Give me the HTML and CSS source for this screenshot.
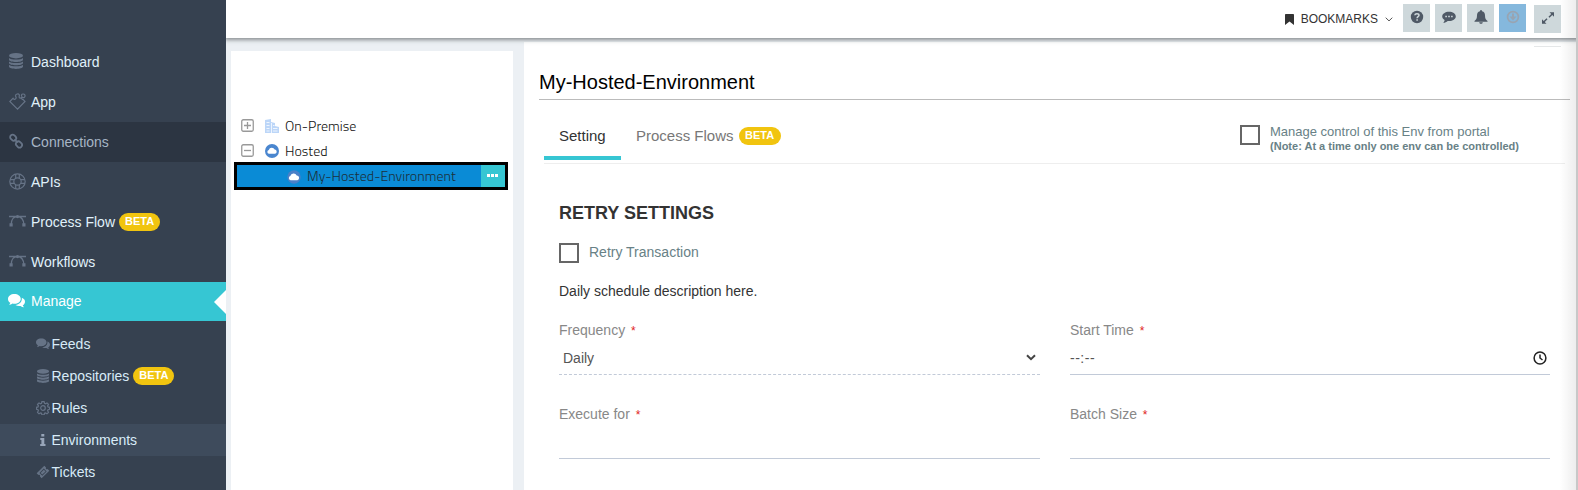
FILE: index.html
```
<!DOCTYPE html>
<html lang="en">
<head>
<meta charset="utf-8">
<title>Environments</title>
<link rel="stylesheet" href="styles.css">
</head>
<body>
<svg class="defs" width="0" height="0">
  <symbol id="db" viewBox="0 0 14 16"><ellipse cx="7" cy="2.700" rx="7" ry="2.700"/><path d="M0 5c2 2 12 2 14 0v1.700c0 3-14 3-14 0zM0 8.400c2 2 12 2 14 0v1.700c0 3-14 3-14 0zM0 11.800c2 2 12 2 14 0v1.700c0 3.200-14 3.200-14 0z"/></symbol>
  <symbol id="chat" viewBox="0 0 16 13"><path d="M6 0c3.300 0 6 2 6 4.500S9.300 9 6 9c-.6 0-1.200 0-1.700-.2C3.300 9.600 2.200 10 1 10.100c.6-.6 1-1.200 1.200-1.900C.8 7.400 0 6 0 4.500 0 2 2.700 0 6 0z"/><path d="M13 3.500c1.800.7 3 2 3 3.600 0 1.400-.8 2.600-2.100 3.400.2.700.6 1.200 1.200 1.800-1.300 0-2.400-.4-3.300-1.200-1.800.3-3.500 0-4.800-.9 3.700-.3 6.500-2.800 6-6.700z"/></symbol>
  <symbol id="flow" viewBox="0 0 17 12"><path d="M0 1.500h17M2.200 9.500C2.200 4.800 4.700 1.500 8.500 1.500s6.300 3.300 6.300 8" fill="none" stroke="currentColor" stroke-width="1.300"/><circle cx="8.500" cy="1.600" r="1.600"/><path d="M.5 8.300h3.200v3.200H.5zM13.300 8.300h3.200v3.200h-3.200z"/></symbol>
</svg>
<div class="app">
  <nav class="sidebar">
    <a class="item"><svg class="ico" viewBox="0 0 14 16"><use href="#db"/></svg>Dashboard</a>
    <a class="item"><svg class="ico wide" viewBox="0 0 17 17"><path d="M8.500 16.200.8 8.500 4 5.300c.6 1.500 2.900 1.300 3.100-.3.200-1.300-1-1.700-.5-2.700.5-1.200 2.700-1.900 3.500-.8.700 1-.2 1.700.1 2.700.4 1.200 2.200 1.200 2.600 0 .4-1.100-.7-1.600-.3-2.400.4-.9 2.600-1.100 3.200-.2.600.8.400 2.500-.5 2.900-.8.400-1.500-.4-2.200.2-.8.800.1 2 1.200 2l1.800 1.800z" class="line"/></svg>App</a>
    <a class="item dim"><svg class="ico" viewBox="0 0 14 15"><g class="line thick"><rect x="1" y="1.500" width="6.500" height="5" rx="2.500" transform="rotate(45 4 4)"/><rect x="6.700" y="8.500" width="6.500" height="5" rx="2.500" transform="rotate(45 10 11)"/><path d="m5.600 5.800 3 3.300"/></g></svg>Connections</a>
    <a class="item"><svg class="ico wide" viewBox="0 0 17 17"><g class="line"><circle cx="8.500" cy="8.500" r="7.700"/><circle cx="8.500" cy="8.500" r="3.700"/><path d="M6.700 1v4.200M10.300 1v4.200M6.700 11.800V16M10.300 11.800V16M1 6.700h4.200M1 10.300h4.200M11.800 6.700H16M11.800 10.300H16"/></g></svg>APIs</a>
    <a class="item"><svg class="ico flow" viewBox="0 0 17 12"><use href="#flow"/></svg>Process Flow<span class="beta">BETA</span></a>
    <a class="item"><svg class="ico flow" viewBox="0 0 17 12"><use href="#flow"/></svg>Workflows</a>
    <a class="item active"><svg class="ico chat" viewBox="0 0 16 13"><use href="#chat"/></svg>Manage</a>
    <div class="submenu">
      <a class="sub"><svg class="sico" viewBox="0 0 16 13"><use href="#chat"/></svg>Feeds</a>
      <a class="sub"><svg class="sico" viewBox="0 0 14 16"><use href="#db"/></svg>Repositories<span class="beta">BETA</span></a>
      <a class="sub"><svg class="sico" viewBox="0 0 14 14"><g class="line"><circle cx="7" cy="7" r="2.300"/><path d="m5.900.7h2.200l.4 1.700 1 .4 1.500-.9 1.500 1.500-.9 1.500.4 1 1.600.4v2l-1.600.5-.4 1 .9 1.500-1.500 1.500-1.500-.9-1 .4-.4 1.600H5.900l-.4-1.600-1-.4-1.500.9-1.500-1.500.9-1.500-.4-1L.5 8.300v-2L2 5.900l.4-1-.9-1.500L3 1.900l1.500.9 1-.4z"/></g></svg>Rules</a>
      <a class="sub current"><svg class="sico info" viewBox="0 0 14 14"><path d="M5.300 1h3v2.500h-3zM4.300 5h4v6h1.200v2H4.200v-2h1.200V7H4.300z"/></svg>Environments</a>
      <a class="sub"><svg class="sico" viewBox="0 0 14 14"><path fill-rule="evenodd" d="M8.300.8 10 2.500c-.6 1.200.4 2.200 1.600 1.600l1.700 1.700-7.700 7.500L4 11.600c.5-1.200-.5-2.200-1.600-1.600L.7 8.300zM7.800 3.600 3.500 7.900l2.800 2.800 4.300-4.300zM7.800 4.700l1.800 1.700-3.300 3.200-1.700-1.700z"/></svg>Tickets</a>
    </div>
  </nav>
  <div class="page">
    <header class="topbar">
      <svg class="bookmark" viewBox="0 0 9 11"><path d="M.8 0h7.400q.8 0 .8.800V11L4.500 7.400 0 11V.8Q0 0 .8 0z"/></svg>
      <span class="bm">BOOKMARKS</span>
      <svg class="caret" viewBox="0 0 8 5"><path d="m.7.700 3.300 3.200L7.300.7"/></svg>
      <div class="btns">
        <span class="btn"><svg viewBox="0 0 14 14"><circle cx="7" cy="7" r="6.200"/><path class="cut" d="M4.800 5.300C5 3.200 9 3.200 9 5.300c0 1.400-1.900 1.400-1.900 2.900M7.100 9.200v1.600"/></svg></span>
        <span class="btn"><svg viewBox="0 0 14 14"><path d="M7 1.800c3.700 0 6.800 2 6.800 4.700S10.700 11 7 11l-1.300-.1C4.500 12 3 12.700 1.300 12.900c.7-.8 1.200-1.600 1.300-2.800C1.200 9.200.2 8 .2 6.500.2 3.900 3.300 1.800 7 1.800z"/><path class="cut dots" d="M3.300 6.500h1.600M6.200 6.500h1.600M9.100 6.500h1.600"/></svg></span>
        <span class="btn"><svg viewBox="0 0 14 14"><path d="M7 0q1 0 1 1.200c2.200.5 3 2.200 3 4.300 0 2.900.9 4.400 2.500 5.500v.8H.5V11C2.100 9.900 3 8.400 3 5.500c0-2.100.8-3.800 3-4.300Q6 0 7 0zM5.200 12.200h3.600c-.2 2-3.400 2-3.600 0z"/></svg></span>
        <span class="btn blue"><svg viewBox="0 0 14 14"><circle cx="7" cy="7" r="5.400" fill="none" stroke="currentColor" stroke-width="1.700"/><path d="M6 3.400h2v3.200h2.500L7 10.400 3.500 6.600H6z"/></svg></span>
        <span class="btn last"><svg viewBox="0 0 14 14"><path d="M8.500 1.200h4.500v4.500zM1 8.300v4.500h4.500z"/><path d="M11.500 2.700 8 6.200M2.500 11.300 6 7.800" stroke="currentColor" stroke-width="1.500"/></svg></span>
      </div>
    </header>
    <div class="body">
      <section class="tree">
        <div class="node"><svg class="tog" viewBox="0 0 13 13"><rect x=".75" y=".75" width="11.500" height="11.500" rx="1.500"/><path d="M3 6.500h7M6.500 3v7"/></svg><svg class="nico" viewBox="0 0 14 14"><path fill="#bcd6f8" d="M0 1l6-1v3l4 1v3l4 1v6H0z"/><path stroke="#eef5fe" d="M1.500 3.500h3M1.500 6.500h3M1.500 9.500h3M1.500 12h3M6.500 4v10M8 6.500h1.500M8 9.500h4.500M8 12h4.500"/></svg>On-Premise</div>
        <div class="node"><svg class="tog" viewBox="0 0 13 13"><rect x=".75" y=".75" width="11.500" height="11.500" rx="1.500"/><path d="M3 6.500h7"/></svg><svg class="nico low" viewBox="0 0 14 14"><circle cx="7" cy="7" r="7" fill="#4a86cf"/><path fill="#fff" d="M4 9.800a2 2 0 0 1-.2-3.900 3.200 3.200 0 0 1 5.900-.4 2.200 2.200 0 0 1 .4 4.300z"/></svg>Hosted</div>
        <div class="node selected"><svg class="nico low" viewBox="0 0 14 14"><circle cx="7" cy="7" r="6.700" fill="#4a80c8"/><path fill="#fff" d="M3.500 10.200a2.200 2.200 0 0 1-.2-4.200 3.400 3.400 0 0 1 6.400-.5 2.400 2.400 0 0 1 .7 4.700z"/></svg><span class="name">My-Hosted-Environment</span><span class="more"><i></i><i></i><i></i></span></div>
      </section>
      <main class="main">
        <div class="stub"></div>
        <h1>My-Hosted-Environment</h1>
        <div class="tabs">
          <span class="tab on">Setting</span>
          <span class="tab">Process Flows<span class="beta">BETA</span></span>
          <label class="manage"><span class="box"></span><span class="mtext">Manage control of this Env from portal<b>(Note: At a time only one env can be controlled)</b></span></label>
        </div>
        <div class="form">
          <h2>RETRY SETTINGS</h2>
          <label class="retry"><span class="box"></span><span class="rtext">Retry Transaction</span></label>
          <p class="desc">Daily schedule description here.</p>
          <div class="grid">
            <div class="field"><label>Frequency <em>*</em></label><div class="ctl dashed"><span class="val">Daily</span><svg class="sel" viewBox="0 0 10 7"><path d="m1 1.200 4 4 4-4"/></svg></div></div>
            <div class="field"><label>Start Time <em>*</em></label><div class="ctl"><span class="time">--:--</span><svg class="clock" viewBox="0 0 14 14"><circle cx="7" cy="7" r="5.900"/><path d="M7 3.500V7l2.500 2"/></svg></div></div>
            <div class="field"><label>Execute for <em>*</em></label><div class="ctl"></div></div>
            <div class="field"><label>Batch Size <em>*</em></label><div class="ctl"></div></div>
          </div>
        </div>
      </main>
    </div>
  </div>
  <div class="edge"></div>
</div>
</body>
</html>
```
FILE: styles.css
```
* { box-sizing: border-box; }
body { margin: 0; font: 14px/20px "Liberation Sans", Arial, sans-serif; color: #333; background: #fff; }
.defs { display: block; }
.app { display: flex; width: 1578px; height: 490px; overflow: hidden; position: relative; }
.line { fill: none; stroke: currentColor; stroke-width: 1.2; }
.thick { stroke-width: 1.8; }

/* navigation */
.sidebar { flex: none; width: 226px; padding-top: 42px; background: #364150; }
.item { display: flex; align-items: center; height: 40px; padding-left: 9px; color: #e0f1fb; }
.ico { width: 14px; height: 16px; margin-right: 8px; color: #667386; fill: currentColor; position: relative; top: -1px; }
.ico.wide, .ico.flow, .ico.chat { width: 17px; margin-right: 5px; }
.ico.wide { height: 17px; }
.ico.flow { height: 12px; }
.item.dim { background: #2c3542; color: #a7b5c6; }
.item.active { position: relative; height: 39px; background: #36c6d3; color: #fff; padding: 0 0 2px 8px; }
.item.active .ico { color: #fff; height: 14px; margin-right: 6px; top: 0; }
.item.active::after { content: ""; position: absolute; right: 0; top: 8px; border: 12px solid transparent; border-left: 0; border-right-color: #fff; }
.submenu { padding-top: 7px; }
.sub { display: flex; align-items: center; height: 32px; padding-left: 36px; color: #d8ebf8; }
.sub.current { background: #3e4b5c; }
.sico { width: 14px; height: 14px; margin-right: 1.500px; color: #667386; fill: currentColor; }
.sico.info { color: #97a5b8; }
.beta { display: inline-block; width: 41px; height: 18px; margin-left: 4px; border-radius: 9px; background: #f1c40f; color: #fff; font-weight: bold; font-size: 11px; line-height: 17px; text-align: center; }

/* header */
.page { flex: 1; display: flex; flex-direction: column; background: #ecf0f4; }
.topbar { position: relative; z-index: 1; flex: none; display: flex; align-items: center; height: 38px; padding-right: 17px; justify-content: flex-end; background: #fff; box-shadow: 0 1px 4px 1px rgba(70, 76, 80, .6); clip-path: inset(0 0 -10px 0); }
.bookmark { width: 9px; height: 11px; fill: #333; margin-right: 7px; }
.bm { font-size: 12px; }
.caret { width: 8px; height: 5px; margin: 0 10px 0 7px; fill: none; stroke: #555; }
.btns { display: flex; gap: 5px; margin-bottom: 2px; }
.btn { display: flex; align-items: center; justify-content: center; width: 27px; height: 28px; background: #ced8db; color: #4f5966; }
.btn svg { width: 14px; height: 14px; fill: currentColor; position: relative; top: -1px; }
.btn .cut { fill: none; stroke: #ced8db; stroke-width: 1.5; }
.btn.blue { background: #85b8dd; color: #98a4b2; }
.btn.last { margin-left: 3px; position: relative; top: 1px; }

/* environment tree */
.body { flex: 1; display: flex; }
.tree { width: 282px; margin: 13px 11px 0 5px; padding: 62px 5px 0 4px; background: #fff; font-family: "Titillium Web", "Open Sans", sans-serif; font-weight: 300; }
.node { display: flex; align-items: center; height: 25px; padding-left: 6px; color: #111; letter-spacing: .03px; }
.tog { width: 13px; height: 13px; margin-right: 11px; fill: none; stroke: #999; stroke-width: 1.3; }
.nico { width: 14px; height: 14px; margin-right: 6px; }
.nico.low { margin-top: 1px; }
.node.selected { height: 28px; margin: -1px 0 0 -1px; padding-left: 50px; border: 3px solid #000; background: #0a8bd6; color: #1c303b; }
.name { flex: 1; }
.more { display: flex; gap: 1px; padding: 0 1px 2px 0; align-items: center; justify-content: center; width: 24px; height: 22px; background: #36c6d3; }
.more i { width: 3px; height: 3px; background: #fff; }

/* detail panel */
.main { flex: 1; margin-top: 4px; padding-left: 15px; background: #fff; }
.stub { width: 27px; height: 1px; margin: 4px 0 0 995px; background: #e5e7e8; }
h1 { width: 1031px; height: 53px; margin: 0; padding-top: 22px; border-bottom: 1px solid #bbb; font-weight: normal; font-size: 20px; line-height: 26px; color: #000; }
.tabs { display: flex; width: 1021px; height: 64px; margin-left: 5px; padding-top: 20px; border-bottom: 1px solid #eee; }
.tab { height: 40px; padding: 6px 15px 0; font-size: 15px; color: #777; white-space: nowrap; }
.tab.on { width: 77px; border-bottom: 4px solid #36c6d3; color: #333; }
.tab .beta { margin-left: 5px; width: 42px; vertical-align: 2px; }
.box { flex: none; width: 20px; height: 20px; border: 2px solid #666; }
.manage { display: flex; gap: 10px; margin: 5px 46px 0 auto; color: #688186; }
.mtext { font-size: 13px; line-height: 14px; }
.mtext b { display: block; font-size: 11px; line-height: 15px; }
.form { padding: 38px 0 0 20px; }
h2 { margin: 0; font-size: 18px; line-height: 22px; }
.retry { display: flex; align-items: center; gap: 10px; height: 20px; margin-top: 19px; color: #688186; }
.rtext { padding-bottom: 2px; }
.desc { margin: 18px 0 19px; color: #333; }
.grid { display: grid; grid-template-columns: 481px 480px; column-gap: 30px; }
.field { height: 84px; color: #888; }
.field em { color: #e02222; font-style: normal; font-size: 12px; margin-left: 2px; }
.ctl { display: flex; align-items: center; justify-content: space-between; height: 34px; border-bottom: 1px solid #c2cad8; color: #555; }
.ctl.dashed { border-bottom-style: dashed; }
.val { padding-left: 4px; }
.time { letter-spacing: .5px; }
.sel { width: 10px; height: 7px; margin-right: 4px; fill: none; stroke: #444; stroke-width: 2; }
.clock { width: 14px; height: 14px; margin-right: 3px; fill: none; stroke: #222; stroke-width: 1.5; }

/* fade along the window border */
.edge { position: absolute; z-index: 2; top: 0; right: 0; width: 18px; height: 490px; background: linear-gradient(to right, rgba(0, 0, 0, 0), rgba(0, 0, 0, .07)); border-right: 2px solid #c8c8c8; }
```
